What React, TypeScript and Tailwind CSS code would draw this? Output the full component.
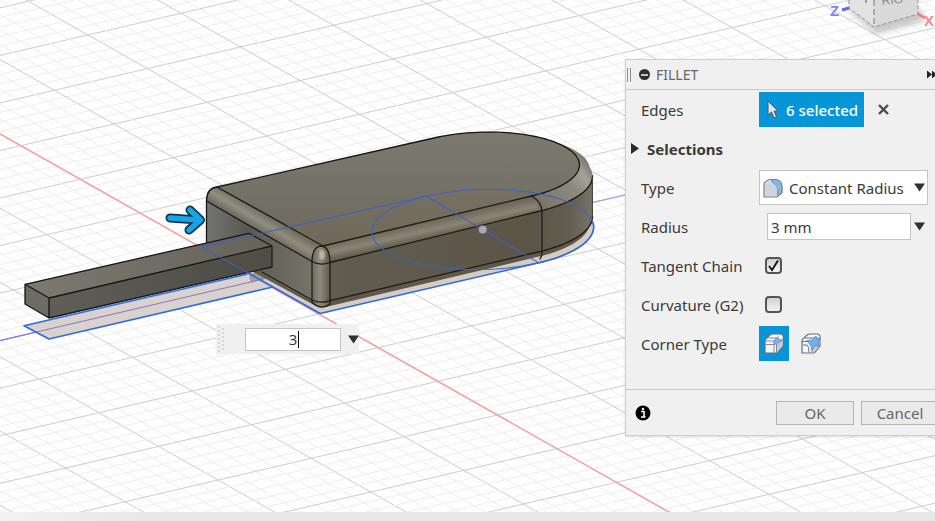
import { useState, type ReactNode } from "react";

// view axes of the ground plane, one major grid cell each
const ORIGIN = { x: 497.3, y: 415 };
const AXIS_X = { x: 59.55, y: 33.67 };
const AXIS_Z = { x: 93.07, y: -21.68 };
const DIVISIONS = 5;

// rounded end of the body: half diameters along both axes
const CX = 482.7;
const U = { x: 56, y: 33.3 };
const V = { x: 95.8, y: -22.3 };

const pt = (cy: number, s: number, deg: number) => {
    const u = s * Math.cos((deg * Math.PI) / 180);
    const v = s * Math.sin((deg * Math.PI) / 180);
    return `${(CX + u * U.x + v * V.x).toFixed(1)} ${(cy + u * U.y + v * V.y).toFixed(1)}`;
};
const front = (cy: number, s: number) => pt(cy, s, 0);
const back = (cy: number, s: number) => pt(cy, s, 180);
const arc = (cy: number, s: number, to: number) => {
    let d = "";
    for (let a = 0; a <= to; a += 3) d += `L${pt(cy, s, a)} `;
    return d;
};
const cap = (cy: number, s: number) => arc(cy, s, 180);
// only the part of the edge that faces the camera
const nearCap = (cy: number, s: number) => arc(cy, s, 60);

const GridLines = () => {
    const lines: ReactNode[] = [];
    for (let i = -70; i <= 70; i++) {
        const major = i % DIVISIONS === 0;
        const k = i / DIVISIONS;
        const ax = ORIGIN.x + k * AXIS_X.x;
        const ay = ORIGIN.y + k * AXIS_X.y;
        const bx = ORIGIN.x + k * AXIS_Z.x;
        const by = ORIGIN.y + k * AXIS_Z.y;
        const stroke = major ? "#cdcdcd" : "#eeeeee";
        lines.push(
            <line key={`a${i}`} x1={ax - 15 * AXIS_Z.x} y1={ay - 15 * AXIS_Z.y} x2={ax + 15 * AXIS_Z.x} y2={ay + 15 * AXIS_Z.y} stroke={stroke} />,
            <line key={`b${i}`} x1={bx - 15 * AXIS_X.x} y1={by - 15 * AXIS_X.y} x2={bx + 15 * AXIS_X.x} y2={by + 15 * AXIS_X.y} stroke={stroke} />,
        );
    }
    return <g strokeWidth="1">{lines}</g>;
};

const Model = () => (
    <g strokeLinejoin="round" strokeLinecap="round">
        {/* sketch profiles on the ground */}
        <path d={`M201.7 246.7 L320 313.5 ${cap(229.5, 1)} Z`} fill="#dcd5cf" />
        <path d="M24 325.7 L49 339 L271.7 287.3 L246.7 274.3 Z" fill="#d9d2cd" />
        <path d="M0 340.5 L272 277" stroke="#8a75c4" />
        <path d="M250 276 Q256 270 264 278 L252 282 Z" fill="#a8a29e" stroke="#8d8888" />

        {/* bottom round */}
        <path d={`M246 268 L314 305 Q321 309 330 306 ${cap(225, 0.965)} Z`} fill="#5b554a" />
        {/* walls */}
        <path d={`M482 178 L592.4 176 ${pt(219, 0.99, 60) && `L${pt(219, 0.99, 60)}`} L482 219 Z`} fill="url(#wall)" />
        <path d={`M330 300.7 ${cap(219, 0.99)} L330 262 Z`} fill="url(#wall)" />
        <path d={`M330 262.5 L${front(178.5, 0.99)} L${front(219, 0.99)} L330 300.7 Z`} fill="url(#side)" />
        <path d="M206.5 243 L206.5 201 L312 261.5 L312 301 L250 268 Z" fill="url(#end)" />
        {/* top round */}
        <path d={`M320 264 ${cap(178.5, 0.99)} L320 250 Z`} fill="url(#roundCap)" />
        <path d={`M320 258 ${cap(172, 0.965)} L320 250 Z`} fill="url(#roundCap)" />
        <path d={`M323 246 L${front(167, 0.872)} Q538 201 ${front(178.5, 0.99)} L330 262.5 Z`} fill="url(#roundFront)" />
        <path d="M217 187 L323 246 L312 261.5 L206.5 201 Q206.5 188 217 187 Z" fill="url(#roundEnd)" />
        {/* top face */}
        <path d={`M217 187 L323 246 ${cap(167, 0.872)} Z`} fill="url(#top)" />
        {/* corner */}
        <path d="M312 302 V262 Q312 246 322 246 Q330 248 330 262 V304 Q321 311 312 302 Z" fill="url(#post)" />
        <ellipse cx="322" cy="255" rx="3" ry="5" fill="#d6d2c4" opacity="0.75" filter="url(#soft)" />

        <g fill="none" stroke="#151512" strokeWidth="1.3">
            <path d="M206.5 242 V200 Q207 188 217 187" />
            <path d={`M217 187 L323 246 ${cap(167, 0.872)} Z`} />
            <path d="M206.5 201 L312 261.5 Q320 266 330 262.5" />
            <path d={`M330 262.5 ${nearCap(178.5, 0.99)}`} />
            <path d={`M330 300.7 ${nearCap(219, 0.99)}`} />
            <path d="M262 272 L312 300 Q321 304 330 300.7" />
            <path d="M312 302 V262 Q312 246 322 246 Q330 248 330 262 V304 Q321 311 312 302 Z" />
            <path d={`M${front(167, 0.872)} Q542 202 542 212 V255 L540 259`} />
        </g>
        <path d="M592.4 176 V218" stroke="#3a3932" fill="none" />

        {/* stick */}
        <path d="M25 284.3 L249 233.3 L272 246 L49 298 Z" fill="url(#stickTop)" />
        <path d="M49 298 L272 246 V267 L49 318 Z" fill="url(#stickSide)" />
        <path d="M25 284.3 L49 298 V318 L25 304 Z" fill="#6c6c65" />
        <path d="M25 284.3 L249 233.3 L272 246 V267 L49 318 L25 304 Z M25 284.3 L49 298 L272 246 M49 298 V318" fill="none" stroke="#151512" strokeWidth="1.3" />

        {/* sketch shown through the solid */}
        <path d={`M201.7 246.7 L320 313.5 ${cap(229.5, 1)} Z`} fill="#8f6f50" opacity="0.08" />
        <g fill="none" stroke="#3c62c0" strokeWidth="1.2" opacity="0.85">
            <path d={`M${front(229.5, 1)} ${arc(229.5, 1, 360)}`} />
            <path d={`M${back(229.5, 1)} L201.7 246.7 L320 313.5`} />
            <path d={`M${back(229.5, 1)} L${front(229.5, 1)}`} />
        </g>
        <g fill="none" stroke="#2e6be6" strokeWidth="1.6">
            <path d={`M248 273 L320 313.5 ${arc(229.5, 1, 66)}`} />
            <path d="M246.7 274.3 L24 325.7 L49 339 L271.7 287.3" />
        </g>
        <circle cx="482.7" cy="229.5" r="4" fill="#a4a8b2" />
    </g>
);

const ViewCube = () => (
    <g fontFamily="'Liberation Sans', sans-serif">
        <path d="M846 8 L876 34 L926 20 L918 8 Z" fill="#9a9a9a" opacity="0.55" filter="url(#shadow)" />
        <path d="M849 0 V8 L874 27 V0 Z" fill="#e3e3e3" />
        <path d="M874 0 V27 L918 14 V0 Z" fill="#dadada" />
        <path d="M849 0 V8 L874 27 L918 14 V0" fill="none" stroke="#969696" strokeDasharray="4 2" />
        <path d="M874 0 V27" stroke="#777" strokeDasharray="6 3" />
        <text x="882" y="5" fontSize="12" fill="#8b8b8b" transform="rotate(-6 882 4)">RIG</text>
        <path d="M866 0 V3" stroke="#808080" strokeWidth="1.5" />
        <path d="M842 10 L849 8" stroke="#6a66ee" strokeWidth="3" />
        <path d="M918 14 L925 18" stroke="#f28080" strokeWidth="3" />
        <text x="830" y="16" fontSize="15" fontWeight="bold" fill="#8480f2">Z</text>
        <text x="924" y="26" fontSize="15" fontWeight="bold" fill="#f48c8c">X</text>
    </g>
);

const Scene = () => (
    <svg className="absolute inset-0 h-full w-full" viewBox="0 0 935 512" preserveAspectRatio="xMidYMid slice" aria-hidden="true">
        <defs>
            <linearGradient id="top" x1="0" y1="0" x2="0" y2="1">
                <stop offset="0" stopColor="#7c7a6f" />
                <stop offset="1" stopColor="#6d685d" />
            </linearGradient>
            <linearGradient id="wall" gradientUnits="userSpaceOnUse" x1="535" y1="0" x2="593" y2="0">
                <stop offset="0" stopColor="#58544a" />
                <stop offset="0.6" stopColor="#5f5c51" />
                <stop offset="1" stopColor="#77766b" />
            </linearGradient>
            <linearGradient id="side" x1="0" y1="0" x2="1" y2="0">
                <stop offset="0" stopColor="#5e5b51" />
                <stop offset="1" stopColor="#575348" />
            </linearGradient>
            <linearGradient id="end" gradientUnits="userSpaceOnUse" x1="207" y1="0" x2="312" y2="0">
                <stop offset="0" stopColor="#747571" />
                <stop offset="0.35" stopColor="#5a5a55" />
                <stop offset="0.6" stopColor="#62625a" />
                <stop offset="1" stopColor="#74746c" />
            </linearGradient>
            <linearGradient id="roundFront" gradientUnits="userSpaceOnUse" x1="420" y1="223" x2="424" y2="241">
                <stop offset="0" stopColor="#6d685c" />
                <stop offset="0.5" stopColor="#8b8679" />
                <stop offset="1" stopColor="#5b564b" />
            </linearGradient>
            <linearGradient id="roundEnd" gradientUnits="userSpaceOnUse" x1="270" y1="217" x2="261" y2="232">
                <stop offset="0" stopColor="#706d62" />
                <stop offset="0.5" stopColor="#928f82" />
                <stop offset="1" stopColor="#6c6b62" />
            </linearGradient>
            <linearGradient id="roundCap" gradientUnits="userSpaceOnUse" x1="540" y1="205" x2="593" y2="165">
                <stop offset="0" stopColor="#79756a" />
                <stop offset="0.55" stopColor="#8c8a7f" />
                <stop offset="0.8" stopColor="#a3a298" />
                <stop offset="1" stopColor="#6c6b62" />
            </linearGradient>
            <linearGradient id="post" x1="0" y1="0" x2="1" y2="0">
                <stop offset="0" stopColor="#6c6b62" />
                <stop offset="0.45" stopColor="#8e8c80" />
                <stop offset="1" stopColor="#5a574d" />
            </linearGradient>
            <linearGradient id="stickTop" x1="0" y1="0" x2="1" y2="0">
                <stop offset="0" stopColor="#7b7970" />
                <stop offset="1" stopColor="#66625a" />
            </linearGradient>
            <linearGradient id="stickSide" x1="0" y1="0" x2="1" y2="0">
                <stop offset="0" stopColor="#5f5e57" />
                <stop offset="1" stopColor="#4c4a44" />
            </linearGradient>
            <filter id="soft"><feGaussianBlur stdDeviation="1" /></filter>
            <filter id="shadow" x="-20%" y="-40%" width="140%" height="180%"><feGaussianBlur stdDeviation="3" /></filter>
        </defs>
        <rect width="935" height="512" fill="#fefefe" />
        <GridLines />
        <path d="M-60 99.9 L740 552.2" stroke="#fa9c9c" strokeWidth="1.4" />
        <path d="M-60 354.5 L935 122.7" stroke="#a09cf3" strokeWidth="1.2" />
        <Model />
        <g fill="none" strokeLinecap="round" strokeLinejoin="round">
            <path d="M170 218 L199 220 M190 210 L200.5 220 L189 230" stroke="#163540" strokeWidth="9" />
            <path d="M170 218 L199 220 M190 210 L200.5 220 L189 230" stroke="#14a5ea" strokeWidth="5.5" />
        </g>
        <ViewCube />
    </svg>
);

const Triangle = ({ className }: { className?: string }) => (
    <svg className={className} width="11" height="9" viewBox="0 0 11 9" aria-hidden="true">
        <path d="M0 0.5 H11 L5.5 8.5 Z" fill="#303030" />
    </svg>
);

const CornerIcon = ({ setback }: { setback?: boolean }) => (
    <svg width="20" height="21" viewBox="0 0 20 21" aria-hidden="true">
        <path d="M1 8 Q1 6.5 3 5 L6 2 Q7 1 9 1 H16 Q19 1 19 4 V13 L14 19 Q13 20 11.5 20 H1 Z" fill="#f2f5f8" stroke="#66717c" strokeWidth="1.2" />
        <path d="M12 8 L18.500 3 V13 L13 19.500 H12 Z" fill="#c5ced8" />
        {setback ? (
            <>
                <path d="M1.500 8.500 H7 M4 5 L16 5 M2 12 H6 Q8 13 8 19.500 M11 19 V16" fill="none" stroke="#66717c" />
                <path d="M6 7.500 L11 7 L15 3 L16 5.500 L19 5.500 L17.500 9 L18 13 L14 13 L11 17 L10 13 Z" fill="#78aee6" stroke="#4d80b8" strokeWidth="0.7" />
            </>
        ) : (
            <>
                <path d="M1.500 8 H10 L16 2 M10 8 V19.500 M12.500 10 V19.500 M1.500 11.500 H10 L18.500 7 M4.500 5 H13" fill="none" stroke="#7a8590" strokeWidth="0.9" />
                <path d="M10 8.500 Q11 5 14 4.500 Q17 5 17 8 L12.500 11.500 Q10 11 10 8.500 Z" fill="#82b3e4" stroke="#4d80b8" strokeWidth="0.6" />
                <circle cx="16.500" cy="4" r="2" fill="#fff" />
            </>
        )}
    </svg>
);

const Row = ({ label, htmlFor, children }: { label: string; htmlFor?: string; children: ReactNode }) => (
    <div className="flex h-[39px] items-center pl-[15px]">
        {htmlFor ? (
            <label htmlFor={htmlFor} className="w-[118px] shrink-0">{label}</label>
        ) : (
            <span className="w-[118px] shrink-0">{label}</span>
        )}
        {children}
    </div>
);

const Check = ({ id, checked, onChange }: { id: string; checked: boolean; onChange: (v: boolean) => void }) => (
    <span className="relative ml-[6px] flex">
        <input
            id={id}
            type="checkbox"
            checked={checked}
            onChange={(e) => onChange(e.target.checked)}
            className="size-[17px] appearance-none rounded-[4px] border-2 border-[#555] bg-linear-to-b from-[#cfcfcf] to-[#f4f4f4]"
        />
        {checked && (
            <svg className="pointer-events-none absolute inset-0" width="17" height="17" viewBox="0 0 17 17" aria-hidden="true">
                <path d="M4 9 L7 13 L13 3.5" fill="none" stroke="#161616" strokeWidth="2" />
            </svg>
        )}
    </span>
);

const FilletPanel = () => {
    const [type, setType] = useState("Constant Radius");
    const [radius, setRadius] = useState("3 mm");
    const [tangent, setTangent] = useState(true);
    const [curvature, setCurvature] = useState(false);
    const [corner, setCorner] = useState(0);

    return (
        <section className="relative mt-[59px] -mr-2 ml-auto w-[318px] border border-[#cfcfcf] bg-[#f0f0f0] shadow-sm">
            <header className="flex h-[30px] items-center border-b border-[#c9c9c9] pr-1 pl-px">
                <span className="h-[14px] w-[4px] border-x border-[#8f8f8f]" />
                <button type="button" aria-label="Collapse" className="ml-2 flex size-[11px] items-center justify-center rounded-full bg-[#2e2e2e]">
                    <span className="h-[2px] w-[7px] bg-[#c4c4c4]" />
                </button>
                <h2 className="ml-[6px] text-[14px] text-[#666]">FILLET</h2>
                <button type="button" aria-label="Expand" className="ml-auto">
                    <svg width="11" height="9" viewBox="0 0 11 9" aria-hidden="true">
                        <path d="M0 0.5 L5 4.5 L0 8.5 Z M5 0.5 L10 4.5 L5 8.5 Z M10 0.5 H11 V8.5 H10 Z" fill="#222" />
                    </svg>
                </button>
            </header>

            <div className="pb-[26px]">
                <Row label="Edges">
                    <button type="button" className="flex h-[35px] w-[105px] items-center bg-[#0696d7] pl-2 text-white">
                        <svg width="12" height="19" viewBox="0 0 12 19" aria-hidden="true">
                            <path d="M1 1 V15 L4.5 12 L7 18 L9.5 17 L7 11 H11 Z" fill="#dfe5ea" stroke="#4e5b66" />
                        </svg>
                        <span className="ml-[7px] font-medium">6 selected</span>
                    </button>
                    <button type="button" aria-label="Clear edges" className="ml-[14px]">
                        <svg width="11" height="11" viewBox="0 0 11 11" aria-hidden="true">
                            <path d="M1 1 L10 10 M10 1 L1 10" stroke="#4a4a4a" strokeWidth="2.4" />
                        </svg>
                    </button>
                </Row>

                <button type="button" className="flex h-[39px] items-center pl-[5px] font-bold">
                    <svg width="8" height="11" viewBox="0 0 8 11" aria-hidden="true">
                        <path d="M0 0 L8 5.5 L0 11 Z" fill="#2b2b2b" />
                    </svg>
                    <span className="ml-2">Selections</span>
                </button>

                <Row label="Type" htmlFor="type">
                    <div className="relative w-[169px]">
                        <select
                            id="type"
                            value={type}
                            onChange={(e) => setType(e.target.value)}
                            className="h-[35px] w-full appearance-none border border-[#c4c4c4] bg-white pl-[29px]"
                        >
                            <option>Constant Radius</option>
                            <option>Chord Length</option>
                        </select>
                        <svg className="pointer-events-none absolute top-2 left-1" width="20" height="20" viewBox="0 0 20 20" aria-hidden="true">
                            <path d="M1 6 Q1 4.5 3 3.5 L6 1.5 H13 Q19 3 19 9 V15 L14 19 H1 Z" fill="#dfe3ea" stroke="#7b828c" strokeWidth="1.2" />
                            <path d="M8 3 Q11 0.5 14 1.5 Q19 4 19 9 V13 L14.5 17 Q15 8 8 3 Z" fill="#8ab4e2" stroke="#5b83b4" strokeWidth="0.8" />
                            <path d="M2 7 Q5 3 9 5 Q14 7 14 12 V18 H2 Z" fill="#cfd4df" />
                        </svg>
                        <Triangle className="pointer-events-none absolute top-[13px] right-[3px]" />
                    </div>
                </Row>

                <Row label="Radius" htmlFor="radius">
                    <input
                        id="radius"
                        value={radius}
                        onChange={(e) => setRadius(e.target.value)}
                        className="ml-2 h-[27px] w-[144px] border border-[#c4c4c4] bg-white px-[3px]"
                    />
                    <button type="button" aria-label="Radius options" className="ml-[3px]">
                        <Triangle />
                    </button>
                </Row>

                <Row label="Tangent Chain" htmlFor="tangent">
                    <Check id="tangent" checked={tangent} onChange={setTangent} />
                </Row>
                <Row label="Curvature (G2)" htmlFor="curvature">
                    <Check id="curvature" checked={curvature} onChange={setCurvature} />
                </Row>

                <Row label="Corner Type">
                    <button
                        type="button"
                        aria-label="Rolling ball"
                        aria-pressed={corner === 0}
                        onClick={() => setCorner(0)}
                        className="flex h-[35px] w-[30px] items-center justify-center aria-pressed:bg-[#0696d7]"
                    >
                        <CornerIcon />
                    </button>
                    <button
                        type="button"
                        aria-label="Setback"
                        aria-pressed={corner === 1}
                        onClick={() => setCorner(1)}
                        className="ml-[7px] flex h-[35px] w-[30px] items-center justify-center aria-pressed:bg-[#0696d7]"
                    >
                        <CornerIcon setback />
                    </button>
                </Row>
            </div>

            <footer className="flex h-[46px] items-center border-t border-[#c9c9c9] pr-[3px] pl-[9px]">
                <button type="button" aria-label="Info">
                    <svg width="16" height="16" viewBox="0 0 16 16" aria-hidden="true">
                        <circle cx="8" cy="8" r="7.5" fill="#000" />
                        <path d="M6 6.5 H9 V11.5 M6 12 H10.5" fill="none" stroke="#fff" strokeWidth="1.6" />
                        <circle cx="8" cy="4" r="1.2" fill="#fff" />
                    </svg>
                </button>
                <button type="button" className="ml-auto h-6 w-[78px] border border-[#b5b5b5] bg-[#eaeaea] text-[#666]">OK</button>
                <button type="button" className="ml-[7px] h-6 w-[78px] border border-[#b5b5b5] bg-[#eaeaea] text-[#666]">Cancel</button>
            </footer>
        </section>
    );
};

const ValueInput = () => (
    <div className="absolute top-[324px] left-[216px] flex h-[30px] w-[143px] items-center bg-[#f0f0f0]">
        <svg className="ml-[2px]" width="6" height="26" viewBox="0 0 6 26" aria-hidden="true">
            <path d="M1 0 V26 M5 2 V26" stroke="#cccccc" strokeWidth="1.5" strokeDasharray="2 2" />
        </svg>
        <input aria-label="Radius value" defaultValue="3" className="ml-[21px] h-[23px] w-24 border border-[#c4c4c4] bg-white text-center" />
        <span className="absolute top-[7px] left-[82px] h-[17px] w-px bg-black" />
        <button type="button" aria-label="Value options" className="ml-[7px]">
            <Triangle />
        </button>
    </div>
);

export default function App() {
    return (
        <div className="flex h-screen flex-col overflow-hidden font-['Noto_Sans','Open_Sans',sans-serif] text-[15px] leading-5 text-[#3a3a3a]">
            <main className="relative flex-1 overflow-hidden">
                <Scene />
                <ValueInput />
                <div className="flex">
                    <FilletPanel />
                </div>
            </main>
            <div className="h-[9px] shrink-0 bg-linear-to-r from-[#f2f2f2] to-[#e8e8e8] to-15%" />
        </div>
    );
}
